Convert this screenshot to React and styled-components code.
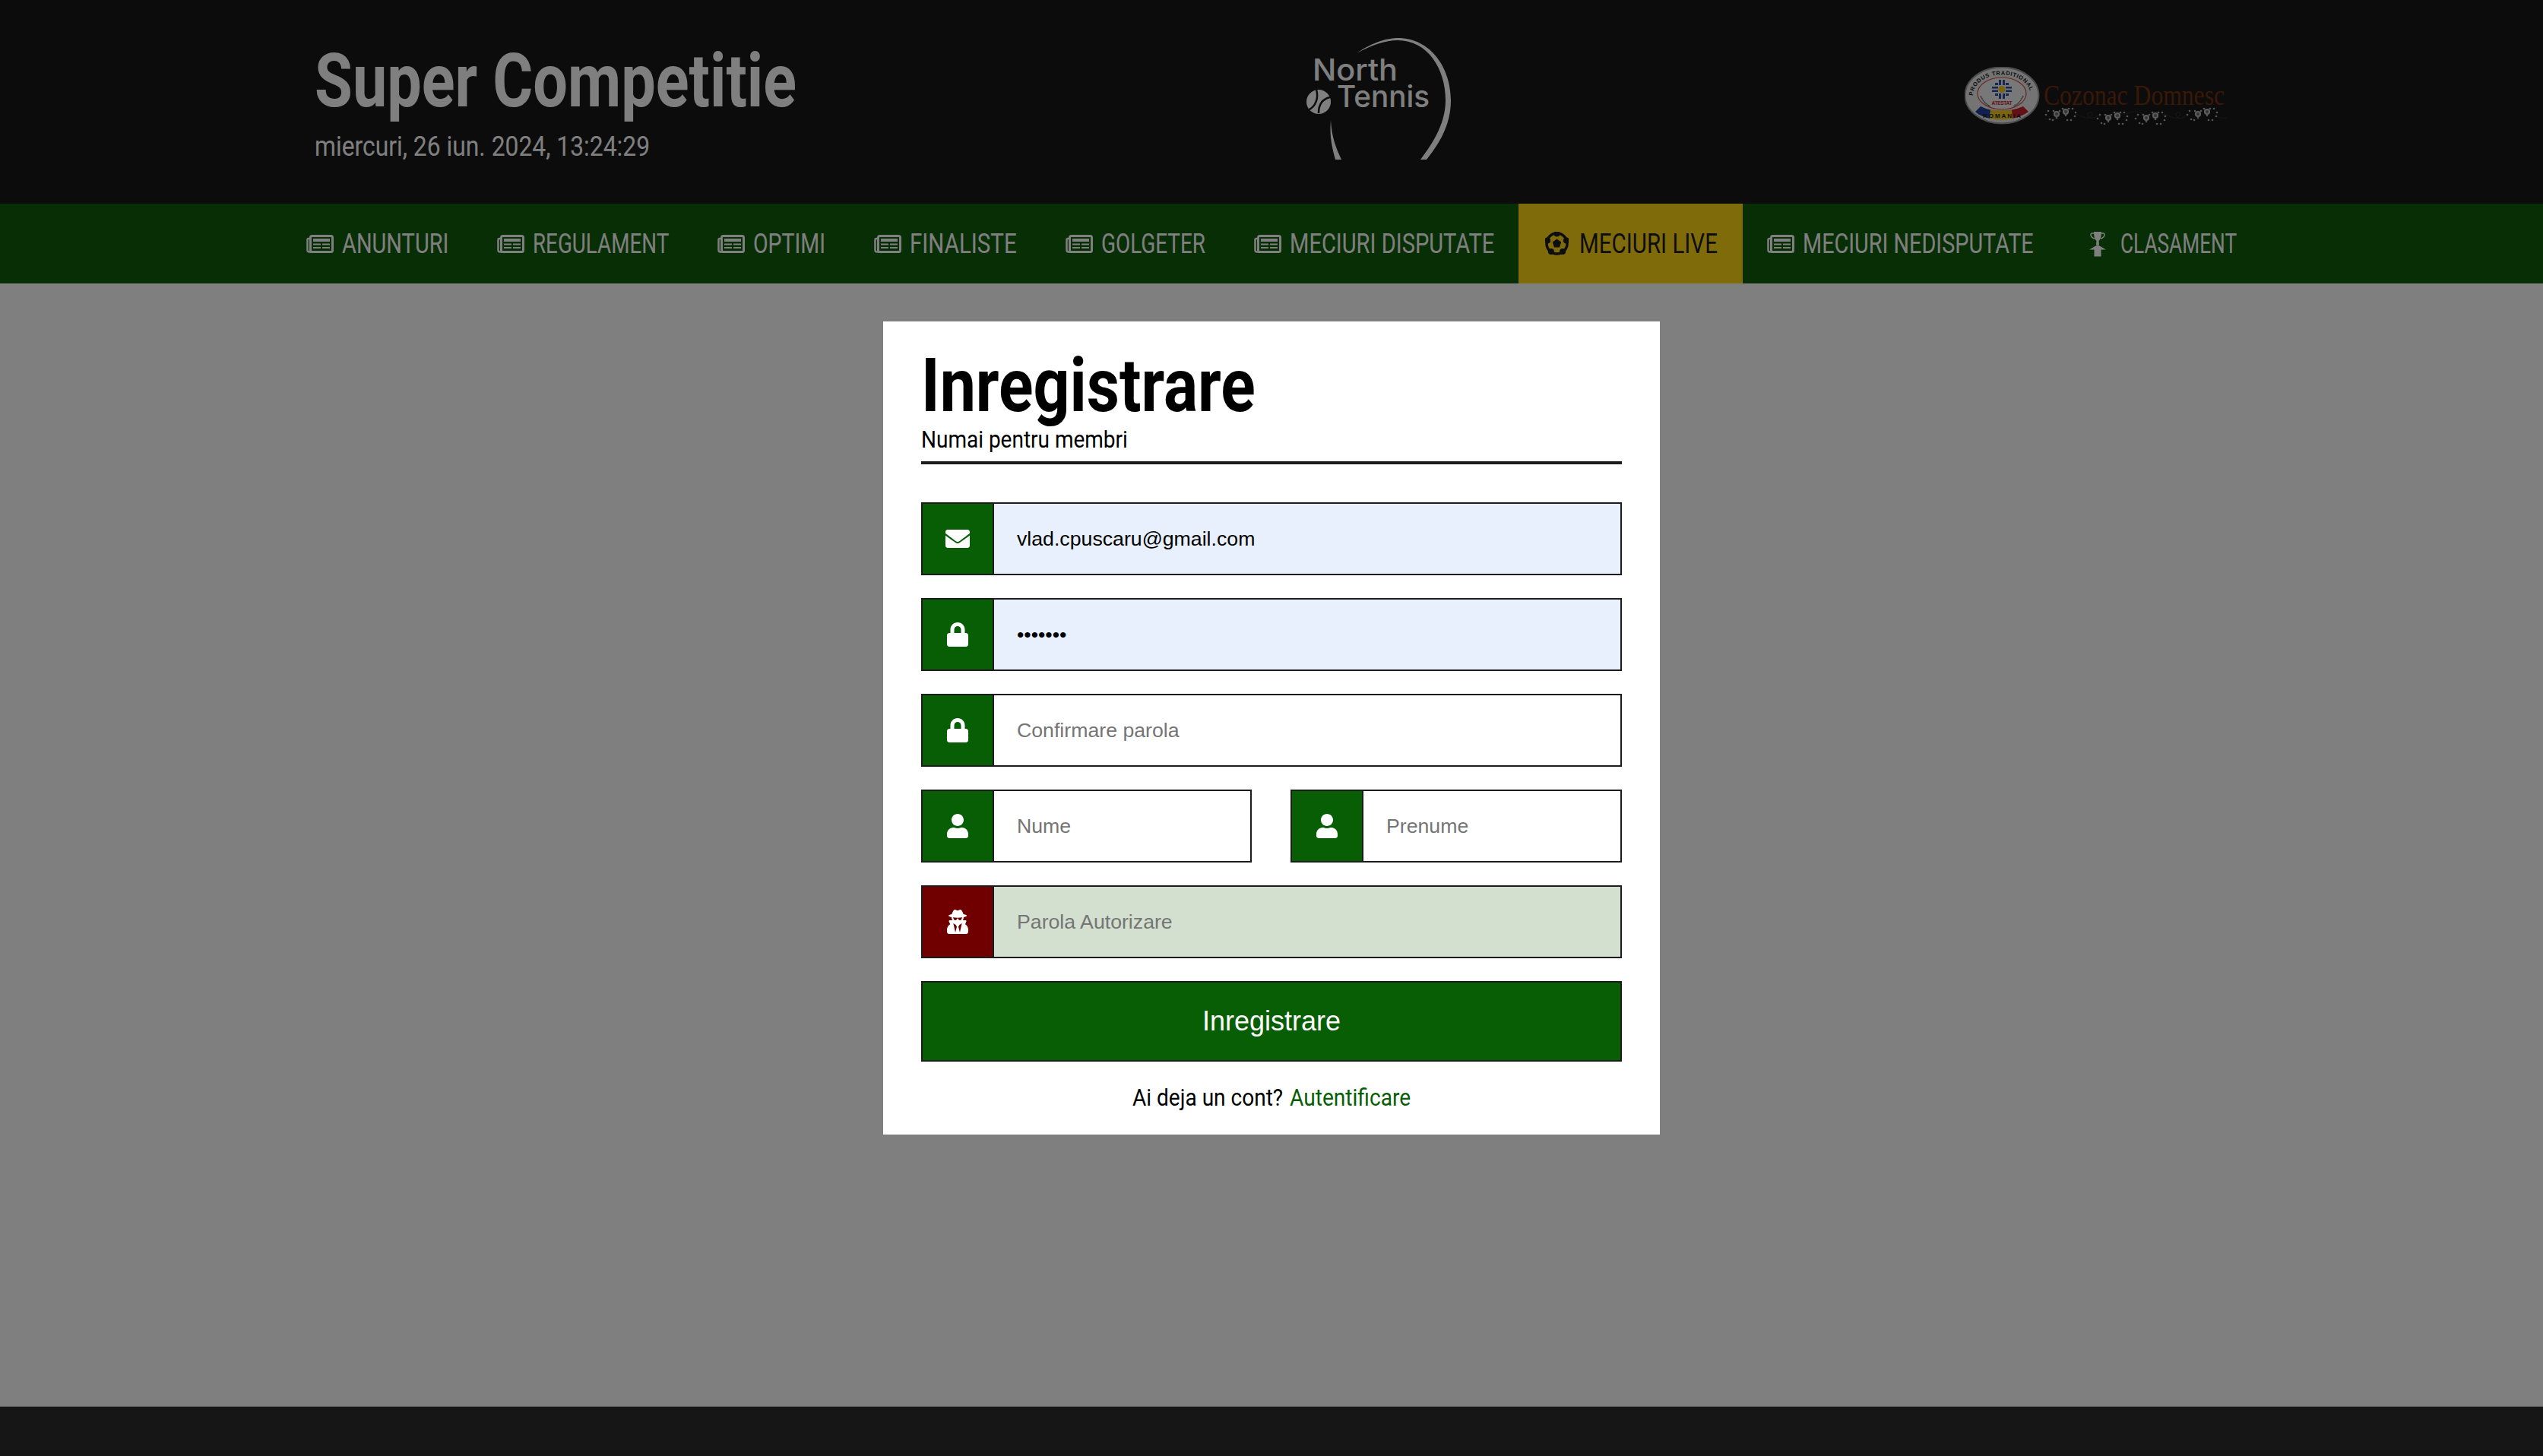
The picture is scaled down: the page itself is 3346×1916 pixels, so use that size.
import React, { useLayoutEffect, useRef, useState } from 'react';
import styled, { createGlobalStyle } from 'styled-components';
import { FaEnvelope, FaLock, FaUser, FaUserSecret } from 'react-icons/fa';

const GlobalStyle = createGlobalStyle`
  html, body { margin: 0; padding: 0; }
  body { font-family: "Liberation Sans", Arial, sans-serif; background: #fff; }
  * { box-sizing: border-box; }
`;

// the site uses a narrow square face that isn't installed, so Roboto gets squeezed to the measured width
const FitBox = styled.span`
  display: inline-block;
  width: ${p => p.$w}px;
  font-family: Roboto, "Liberation Sans", sans-serif;
  white-space: nowrap;
`;

const FitInner = styled.span`
  display: inline-block;
  transform-origin: left center;
`;

const FitText = ({ w, children }) => {
  const ref = useRef(null);
  const [scale, setScale] = useState(1);
  useLayoutEffect(() => {
    setScale(w / ref.current.offsetWidth);
  }, [w]);
  return (
    <FitBox $w={w}>
      <FitInner ref={ref} style={{ transform: `scaleX(${scale})` }}>{children}</FitInner>
    </FitBox>
  );
};

const Page = styled.div`
  display: flex;
  flex-direction: column;
  min-height: 1916px;
`;

const Header = styled.header`
  height: 268px;
  background: #181818;
  display: flex;
  justify-content: center;
`;

const HeaderInner = styled.div`
  width: 2604px;
  padding: 0 10px 0 43px;
  display: flex;
  justify-content: space-between;
  align-items: center;
`;

const Brand = styled.div`
  width: 636px;
  display: flex;
  flex-direction: column;
  color: #fff;
`;

const SiteTitle = styled.h1`
  margin: 0;
  font-size: 98px;
  line-height: 104px;
  font-weight: 700;
`;

const DateLine = styled.div`
  font-size: 36px;
  line-height: 42px;
  margin-top: 13px;
`;

const Nav = styled.nav`
  height: 105px;
  background: #105c0a;
  display: flex;
  justify-content: center;
`;

const NavInner = styled.div`
  width: 2604px;
  display: flex;
`;

const NavItem = styled.a`
  display: flex;
  align-items: center;
  gap: ${p => (p.$active ? '14px' : '11px')};
  padding: ${p => (p.$active ? '0 33px 0 35px' : '0 32px')};
  font-size: 36px;
  color: ${p => (p.$active ? '#1c1c1c' : '#fff')};
  background: ${p => (p.$active ? '#ffd614' : 'transparent')};
  svg { flex: none; }
`;

const Main = styled.main`
  flex: 1;
  background: #fff;
`;

const Footer = styled.footer`
  height: 65px;
  background: #2c2c2c;
`;

const Backdrop = styled.div`
  position: fixed;
  inset: 0;
  background: rgba(0, 0, 0, 0.5);
  display: flex;
  justify-content: center;
  align-items: flex-start;
  padding-top: 423px;
`;

const Modal = styled.div`
  width: 1022px;
  height: 1070px;
  background: #fff;
  padding: 0 50px;
  display: flex;
  flex-direction: column;
`;

const ModalHead = styled.div`
  height: 188px;
  border-bottom: 4px solid #1c1c1c;
  margin-bottom: 50px;
  color: #000;
`;

const ModalTitle = styled.h2`
  margin: 0;
  padding-top: 32px;
  font-size: 98px;
  line-height: 104px;
  font-weight: 700;
`;

const ModalSub = styled.div`
  font-size: 32px;
  line-height: 36px;
`;

const Fields = styled.form`
  display: flex;
  flex-direction: column;
  gap: 30px;
`;

const TwoCols = styled.div`
  display: grid;
  grid-template-columns: 435px 436px;
  gap: 51px;
`;

const Field = styled.label`
  display: flex;
  min-width: 0;
  height: 96px;
  border: 2px solid #1c1c1c;
`;

const IconCell = styled.span`
  width: 94px;
  flex: none;
  display: flex;
  align-items: center;
  justify-content: center;
  color: #fff;
  font-size: 32px;
  background: ${p => (p.$danger ? '#700000' : '#075e05')};
  border-right: 2px solid #1c1c1c;
`;

const Input = styled.input`
  flex: 1;
  min-width: 0;
  border: 0;
  outline: 0;
  padding: 0 30px;
  font-family: "Liberation Sans", Arial, sans-serif;
  font-size: 26.7px;
  color: #000;
  background: ${p => p.$bg || '#fff'};
  &::placeholder { color: #757575; opacity: 1; }
`;

const Submit = styled.button`
  height: 106px;
  border: 2px solid #1c1c1c;
  background: #075e05;
  color: #fff;
  font-family: "Liberation Sans", Arial, sans-serif;
  font-size: 36px;
`;

const Already = styled.div`
  margin-top: 28px;
  display: flex;
  justify-content: center;
  gap: 9px;
  font-size: 32px;
  line-height: 38px;
  color: #000;
`;

const SignIn = styled.a`
  color: #075e05;
`;

const PaperIcon = () => (
  <svg width="36" height="24" viewBox="0 0 36 24" fill="currentColor">
    <rect x="5.500" y="1.500" width="29" height="21" rx="2" fill="none" stroke="currentColor" strokeWidth="3" />
    <path d="M5 5H3a1.500 1.500 0 0 0-1.500 1.500V20A2.500 2.500 0 0 0 4 22.500h3" fill="none" stroke="currentColor" strokeWidth="2.500" />
    <rect x="9" y="5" width="22" height="4" />
    <rect x="9" y="11.500" width="10" height="2" />
    <rect x="21" y="11.500" width="10" height="2" />
    <rect x="9" y="16" width="10" height="2" />
    <rect x="21" y="16" width="10" height="2" />
  </svg>
);

const BallIcon = () => (
  <svg width="31" height="31" viewBox="-15.500 -15.500 31 31" fill="currentColor">
    <circle r="13.500" fill="none" stroke="currentColor" strokeWidth="3.500" />
    <circle cy="-13" r="4" />
    <circle cx="12.400" cy="-4" r="4" />
    <circle cx="7.600" cy="10.500" r="4" />
    <circle cx="-7.600" cy="10.500" r="4" />
    <circle cx="-12.400" cy="-4" r="4" />
    <path d="M0-6L5.700-1.900 3.500 4.900h-7L-5.700-1.900z" />
  </svg>
);

const TrophyIcon = () => (
  <svg width="39" height="34" viewBox="-9 0 39 34" fill="currentColor">
    <path d="M6 1h10c0 6-1 10-3.500 12l.5 5h-4l.5-5C7 11 6 7 6 1z" />
    <path d="M6 3H3.500C2.500 3 2 4 2 5c0 2 2 4 5 5M16 3h2.500c1 0 1.500 1 1.500 2 0 2-2 4-5 5" fill="none" stroke="currentColor" strokeWidth="1.500" />
    <path d="M11 18l11 6.500h-6.500v9h-9v-9H0z" />
  </svg>
);

const NorthTennisLogo = () => (
  <svg width="200" height="188" viewBox="0 0 200 188" fill="#fff">
    <path d="M67 30C90 14 110 10 121 10c44 0 70 40 70 82 0 33-16 58-32 78h-8c19-25 33-50 33-78 0-42-24-79-63-79-16 0-36 7-54 17z" />
    <path d="M33 118c-2 22 2 37 6 52h8c-7-15-13-30-14-52z" />
    <text x="9" y="66" fontFamily="Inter, sans-serif" fontSize="40" fontWeight="500" textLength="112" lengthAdjust="spacingAndGlyphs">North</text>
    <text x="41" y="101" fontFamily="Inter, sans-serif" fontSize="40" fontWeight="500" textLength="122" lengthAdjust="spacingAndGlyphs">Tennis</text>
    <circle cx="17" cy="94" r="16" />
    <path d="M14 78c3 10 0 22-11 27M32 88c-9 2-15 9-15 21" fill="none" stroke="#181818" strokeWidth="2.500" />
  </svg>
);

const Rosette = ({ x, y }) => (
  <g transform={`translate(${x} ${y})`}>
    <circle r="3" fill="#666" stroke="#b8b8b8" strokeWidth="2.200" />
    <circle cx="-4" cy="-4" r="1.300" fill="#aaa" />
    <circle cx="4" cy="-4" r="1.300" fill="#aaa" />
    <circle cy="5" r="1.300" fill="#aaa" />
  </g>
);

const Flower = ({ x, y }) => (
  <g transform={`translate(${x} ${y})`} fill="#a8a8a8">
    <Rosette x={-6} y={0} />
    <Rosette x={6} y={-3} />
    <circle cx="-20" cy="1" r="1.300" />
    <circle cx="-17" cy="-4" r="1.300" />
    <circle cx="-15" cy="7" r="1.300" />
    <circle cx="-11" cy="8" r="1.300" />
    <circle cx="15" cy="-7" r="1.300" />
    <circle cx="19" cy="-2" r="1.300" />
    <circle cx="18" cy="3" r="1.300" />
    <circle cx="8" cy="8" r="1.300" />
    <circle cx="13" cy="8" r="1.300" />
  </g>
);

const CozonacLogo = () => (
  <svg width="380" height="92" viewBox="0 0 380 92">
    <ellipse cx="49" cy="37.500" rx="48.500" ry="37" fill="#e8e8e8" stroke="#999" strokeWidth="2" />
    <ellipse cx="49" cy="35" rx="32" ry="21" fill="#f0f0f0" stroke="#d84a4a" strokeWidth="1.200" />
    <defs>
      <path id="sealTop" d="M11 38C12 20 30 10.500 49 10.500S86 20 87 38" />
    </defs>
    <text fontFamily="Liberation Sans, sans-serif" fontSize="7.500" fontWeight="700" fill="#1a1a1a" letterSpacing="0.700">
      <textPath href="#sealTop">PRODUS TRADITIONAL</textPath>
    </text>
    <path d="M21 52q9 4 13 4.500L33 68q-13-3-19-9z" fill="#1f3f9c" />
    <path d="M34 56.500q15 1.500 28 0l1 11.500q-14 3-30 0z" fill="#f2c81e" />
    <path d="M62 56.500q8-1.500 15-4.500l7 7q-8 6-21 9z" fill="#c8202a" />
    <text x="24" y="66.500" fontFamily="Liberation Sans, sans-serif" fontSize="8" fontWeight="700" fill="#222" textLength="50">ROMANIA</text>
    <g fill="#2c4fa8">
      <rect x="45" y="17" width="3" height="7" />
      <rect x="50" y="17" width="3" height="7" />
      <rect x="45" y="35" width="3" height="7" />
      <rect x="50" y="35" width="3" height="7" />
      <rect x="36" y="26" width="8" height="2.500" />
      <rect x="36" y="30.500" width="8" height="2.500" />
      <rect x="54" y="26" width="8" height="2.500" />
      <rect x="54" y="30.500" width="8" height="2.500" />
      <rect x="40" y="21" width="4" height="3" />
      <rect x="54" y="21" width="4" height="3" />
      <rect x="40" y="35" width="4" height="3" />
      <rect x="54" y="35" width="4" height="3" />
    </g>
    <circle cx="49" cy="29.500" r="4.500" fill="#f2c81e" />
    <text x="35.500" y="50" fontFamily="Liberation Sans, sans-serif" fontSize="6.500" fontWeight="700" fill="#c8202a" textLength="27">ATESTAT</text>
    <path d="M21 38q5 11 13 14M77 38q-5 11-13 14" fill="none" stroke="#444" strokeWidth="1.500" strokeDasharray="1 0.600" />
    <text x="104" y="50" fontFamily="Liberation Serif, serif" fontSize="37" fill="#74300f" textLength="238" lengthAdjust="spacingAndGlyphs">Cozonac Domnesc</text>
    <path d="M105 68q12 3 24-2M146 62c12 4 14 8 20 3s-4-8-4-2 8 6 16-1M212 62q15-6 22 0M262 62c12 4 14 8 20 3s-4-8-4-2 8 6 12 2M333 66q6 2 12 1" fill="none" stroke="#4a4a4a" strokeWidth="0.800" strokeDasharray="1.500 1" />
    <Flower x={127} y={62} />
    <Flower x={195} y={67} />
    <Flower x={245} y={67} />
    <Flower x={313} y={62} />
  </svg>
);

const navItems = [
  { label: 'ANUNTURI', w: 140, icon: <PaperIcon /> },
  { label: 'REGULAMENT', w: 179, icon: <PaperIcon /> },
  { label: 'OPTIMI', w: 95, icon: <PaperIcon /> },
  { label: 'FINALISTE', w: 141, icon: <PaperIcon /> },
  { label: 'GOLGETER', w: 137, icon: <PaperIcon /> },
  { label: 'MECIURI DISPUTATE', w: 269, icon: <PaperIcon /> },
  { label: 'MECIURI LIVE', w: 182, icon: <BallIcon />, active: true },
  { label: 'MECIURI NEDISPUTATE', w: 304, icon: <PaperIcon /> },
  { label: 'CLASAMENT', w: 153, icon: <TrophyIcon /> },
];

export default function App() {
  return (
    <Page>
      <GlobalStyle />
      <Header>
        <HeaderInner>
          <Brand>
            <SiteTitle><FitText w={634}>Super Competitie</FitText></SiteTitle>
            <DateLine><FitText w={441}>miercuri, 26 iun. 2024, 13:24:29</FitText></DateLine>
          </Brand>
          <NorthTennisLogo />
          <CozonacLogo />
        </HeaderInner>
      </Header>
      <Nav>
        <NavInner>
          {navItems.map(item => (
            <NavItem key={item.label} $active={item.active}>
              {item.icon}
              <FitText w={item.w}>{item.label}</FitText>
            </NavItem>
          ))}
        </NavInner>
      </Nav>
      <Main />
      <Footer />
      <Backdrop>
        <Modal>
          <ModalHead>
            <ModalTitle><FitText w={440}>Inregistrare</FitText></ModalTitle>
            <ModalSub><FitText w={272}>Numai pentru membri</FitText></ModalSub>
          </ModalHead>
          <Fields>
            <Field>
              <IconCell><FaEnvelope /></IconCell>
              <Input type="email" defaultValue="vlad.cpuscaru@gmail.com" $bg="#e8f0fe" />
            </Field>
            <Field>
              <IconCell><FaLock /></IconCell>
              <Input type="password" defaultValue="1234567" $bg="#e8f0fe" />
            </Field>
            <Field>
              <IconCell><FaLock /></IconCell>
              <Input type="password" placeholder="Confirmare parola" />
            </Field>
            <TwoCols>
              <Field>
                <IconCell><FaUser /></IconCell>
                <Input placeholder="Nume" />
              </Field>
              <Field>
                <IconCell><FaUser /></IconCell>
                <Input placeholder="Prenume" />
              </Field>
            </TwoCols>
            <Field>
              <IconCell $danger><FaUserSecret /></IconCell>
              <Input type="password" placeholder="Parola Autorizare" $bg="#d3e0cf" />
            </Field>
            <Submit type="button">Inregistrare</Submit>
          </Fields>
          <Already>
            <FitText w={198}>Ai deja un cont?</FitText>
            <SignIn><FitText w={159}>Autentificare</FitText></SignIn>
          </Already>
        </Modal>
      </Backdrop>
    </Page>
  );
}
